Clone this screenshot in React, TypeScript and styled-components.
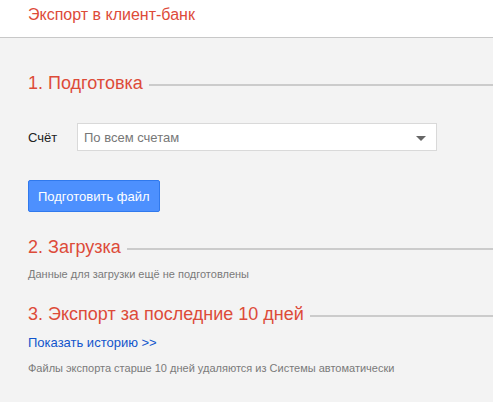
import styled, { createGlobalStyle } from "styled-components";

const GlobalStyle = createGlobalStyle`
    html, body {
        margin: 0;
        padding: 0;
        background: #f3f3f3;
        font-family: "Liberation Sans", Arial, sans-serif;
    }
`;

const Page = styled.div`
    min-height: 100vh;
    background: #f3f3f3;
`;

const Header = styled.header`
    box-sizing: border-box;
    height: 38px;
    padding: 6px 28px 0;
    background: #fff;
    border-bottom: 1px solid #c8c8c8;
`;

const Title = styled.h1`
    margin: 0;
    font-size: 16px;
    line-height: 18px;
    font-weight: 400;
    color: #dd4b39;
`;

const Content = styled.main`
    padding: 35px 0 0 28px;
`;

const Section = styled.section<{ $gap?: number }>`
    margin-bottom: ${(p) => p.$gap ?? 0}px;
`;

const SectionHead = styled.div`
    display: flex;
    align-items: center;
    margin-bottom: 11px;
`;

const SectionTitle = styled.h2`
    margin: 0;
    font-size: 18px;
    line-height: 20px;
    font-weight: 400;
    color: #dd4b39;
    white-space: nowrap;
`;

const Rule = styled.div`
    flex: 1;
    height: 2px;
    margin: 4px 0 0 6px;
    background: #cbcbcb;
`;

const FieldRow = styled.div`
    display: flex;
    align-items: center;
    margin-top: 30px;
`;

const Label = styled.span`
    width: 49px;
    font-size: 13px;
    color: #222;
`;

const Select = styled.div`
    box-sizing: border-box;
    display: flex;
    align-items: center;
    width: 360px;
    height: 28px;
    padding: 0 10px 0 6px;
    background: #fff;
    border: 1px solid #d9d9d9;
    font-size: 13px;
    color: #777;
`;

const Arrow = styled.span`
    margin-left: auto;
    width: 0;
    height: 0;
    border-left: 5px solid transparent;
    border-right: 5px solid transparent;
    border-top: 5px solid #666;
    margin-top: 2px;
`;

const Button = styled.button`
    box-sizing: border-box;
    height: 32px;
    margin-top: 29px;
    padding: 0 9px;
    background: #4d90fe;
    border: 1px solid #3079ed;
    border-radius: 2px;
    color: #fff;
    font-family: inherit;
    font-size: 13px;
    cursor: pointer;
`;

const Note = styled.p`
    margin: 0;
    font-size: 11px;
    line-height: 13px;
    color: #7a7a7a;
`;

const Link = styled.a`
    display: block;
    font-size: 13px;
    line-height: 15px;
    color: #1155cc;
    text-decoration: none;
    margin-bottom: 12px;
`;

export default function App() {
    return (
        <Page>
            <GlobalStyle />
            <Header>
                <Title>Экспорт в клиент-банк</Title>
            </Header>
            <Content>
                <Section $gap={25}>
                    <SectionHead>
                        <SectionTitle>1. Подготовка</SectionTitle>
                        <Rule />
                    </SectionHead>
                    <FieldRow>
                        <Label>Счёт</Label>
                        <Select>
                            По всем счетам
                            <Arrow />
                        </Select>
                    </FieldRow>
                    <Button>Подготовить файл</Button>
                </Section>
                <Section $gap={23}>
                    <SectionHead>
                        <SectionTitle>2. Загрузка</SectionTitle>
                        <Rule />
                    </SectionHead>
                    <Note>Данные для загрузки ещё не подготовлены</Note>
                </Section>
                <Section>
                    <SectionHead>
                        <SectionTitle>3. Экспорт за последние 10 дней</SectionTitle>
                        <Rule />
                    </SectionHead>
                    <Link href="#">Показать историю &gt;&gt;</Link>
                    <Note>Файлы экспорта старше 10 дней удаляются из Системы автоматически</Note>
                </Section>
            </Content>
        </Page>
    );
}
